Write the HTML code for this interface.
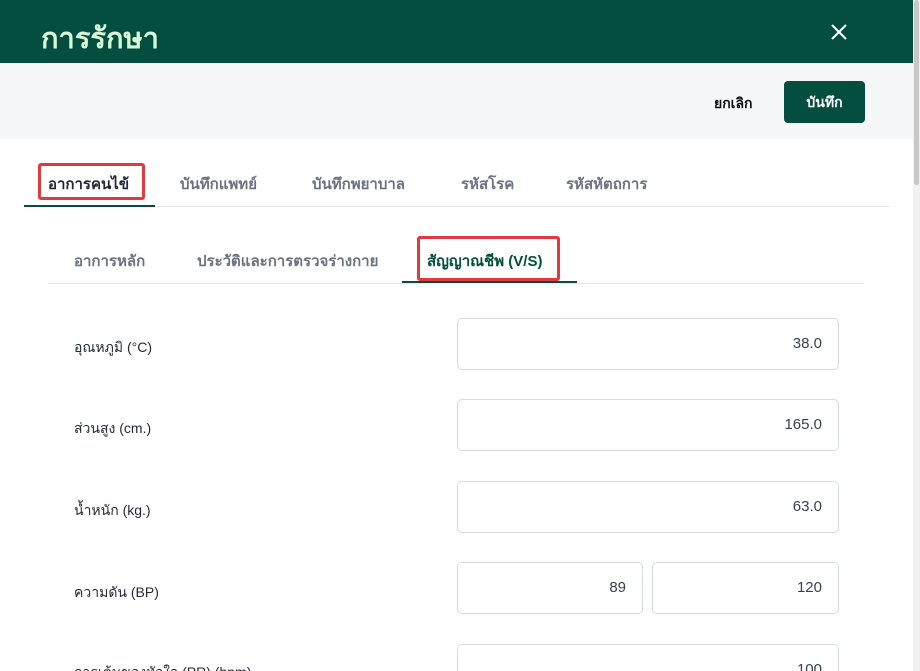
<!DOCTYPE html>
<html><head><meta charset="utf-8"><style>
*{box-sizing:border-box;margin:0;padding:0}
html,body{width:920px;height:671px;overflow:hidden}
body{background:#fff;font-family:"Liberation Sans","DejaVu Sans",sans-serif;position:relative;color:#1f2937}
.a{position:absolute}
.hdr{left:0;top:0;width:913px;height:63px;background:#034e3f}
.bar{left:0;top:63px;width:913px;height:76px;background:#f6f7f9}
.sb{left:913px;top:0;width:7px;height:671px;background:#f1f1f1}
.sbt{left:914px;top:0;width:5px;height:185px;background:#c8c8c8;border-radius:3px}
.t{font-size:15px;color:#6b7280;font-weight:bold;white-space:nowrap}
.inp{border:1px solid #d6dce5;border-radius:5px;background:#fff;height:52px;font-size:15px;color:#374151;text-align:right;padding-right:16px;line-height:50px}
.lbl{font-size:14px;color:#1f2937;left:74px}
.red{border:3px solid #e0393e;border-radius:3px}
</style></head><body>
<div class="a hdr"></div>
<div class="a" style="left:41px;top:15px;font-size:29px;color:#d9f7d9;font-weight:bold">การรักษา</div>
<svg class="a" style="left:830px;top:23px" width="18" height="18" viewBox="0 0 18 18"><path d="M2 2L16 16M16 2L2 16" stroke="#fff" stroke-width="2"/></svg>
<div class="a bar"></div>
<div class="a sb"></div><div class="a sbt"></div>
<div class="a" style="left:714px;top:93px;font-size:14px;color:#111;font-weight:bold">ยกเลิก</div>
<div class="a" style="left:784px;top:81px;width:81px;height:42px;background:#034e3f;border-radius:4px;color:#fff;font-size:14px;font-weight:bold;text-align:center;line-height:42px">บันทึก</div>
<div class="a" style="left:24px;top:206px;width:866px;height:1px;background:#e5e7eb"></div>
<div class="a" style="left:24px;top:205px;width:131px;height:2px;background:#034e3f"></div>
<div class="a red" style="left:38px;top:163px;width:107px;height:37px"></div>
<div class="a t" style="left:48px;top:172px;color:#1f2937">อาการคนไข้</div>
<div class="a t" style="left:180px;top:172px">บันทึกแพทย์</div>
<div class="a t" style="left:312px;top:172px">บันทึกพยาบาล</div>
<div class="a t" style="left:461px;top:172px">รหัสโรค</div>
<div class="a t" style="left:566px;top:172px">รหัสหัตถการ</div>
<div class="a" style="left:48px;top:283px;width:816px;height:1px;background:#e5e7eb"></div>
<div class="a" style="left:402px;top:281px;width:175px;height:2px;background:#034e3f"></div>
<div class="a red" style="left:417px;top:236px;width:143px;height:45px"></div>
<div class="a t" style="left:74px;top:249px">อาการหลัก</div>
<div class="a t" style="left:197px;top:249px">ประวัติและการตรวจร่างกาย</div>
<div class="a t" style="left:427px;top:249px;color:#034e3f">สัญญาณชีพ (V/S)</div>
<div class="a lbl" style="top:337px">อุณหภูมิ (°C)</div>
<div class="a inp" style="left:457px;top:318px;width:382px">38.0</div>
<div class="a lbl" style="top:418px">ส่วนสูง (cm.)</div>
<div class="a inp" style="left:457px;top:399px;width:382px">165.0</div>
<div class="a lbl" style="top:500px">น้ำหนัก (kg.)</div>
<div class="a inp" style="left:457px;top:481px;width:382px">63.0</div>
<div class="a lbl" style="top:582px">ความดัน (BP)</div>
<div class="a inp" style="left:457px;top:562px;width:186px">89</div>
<div class="a inp" style="left:652px;top:562px;width:187px">120</div>
<div class="a lbl" style="top:662px">การเต้นของหัวใจ (PR) (bpm)</div>
<div class="a inp" style="left:457px;top:644px;width:382px">100</div>
</body></html>
